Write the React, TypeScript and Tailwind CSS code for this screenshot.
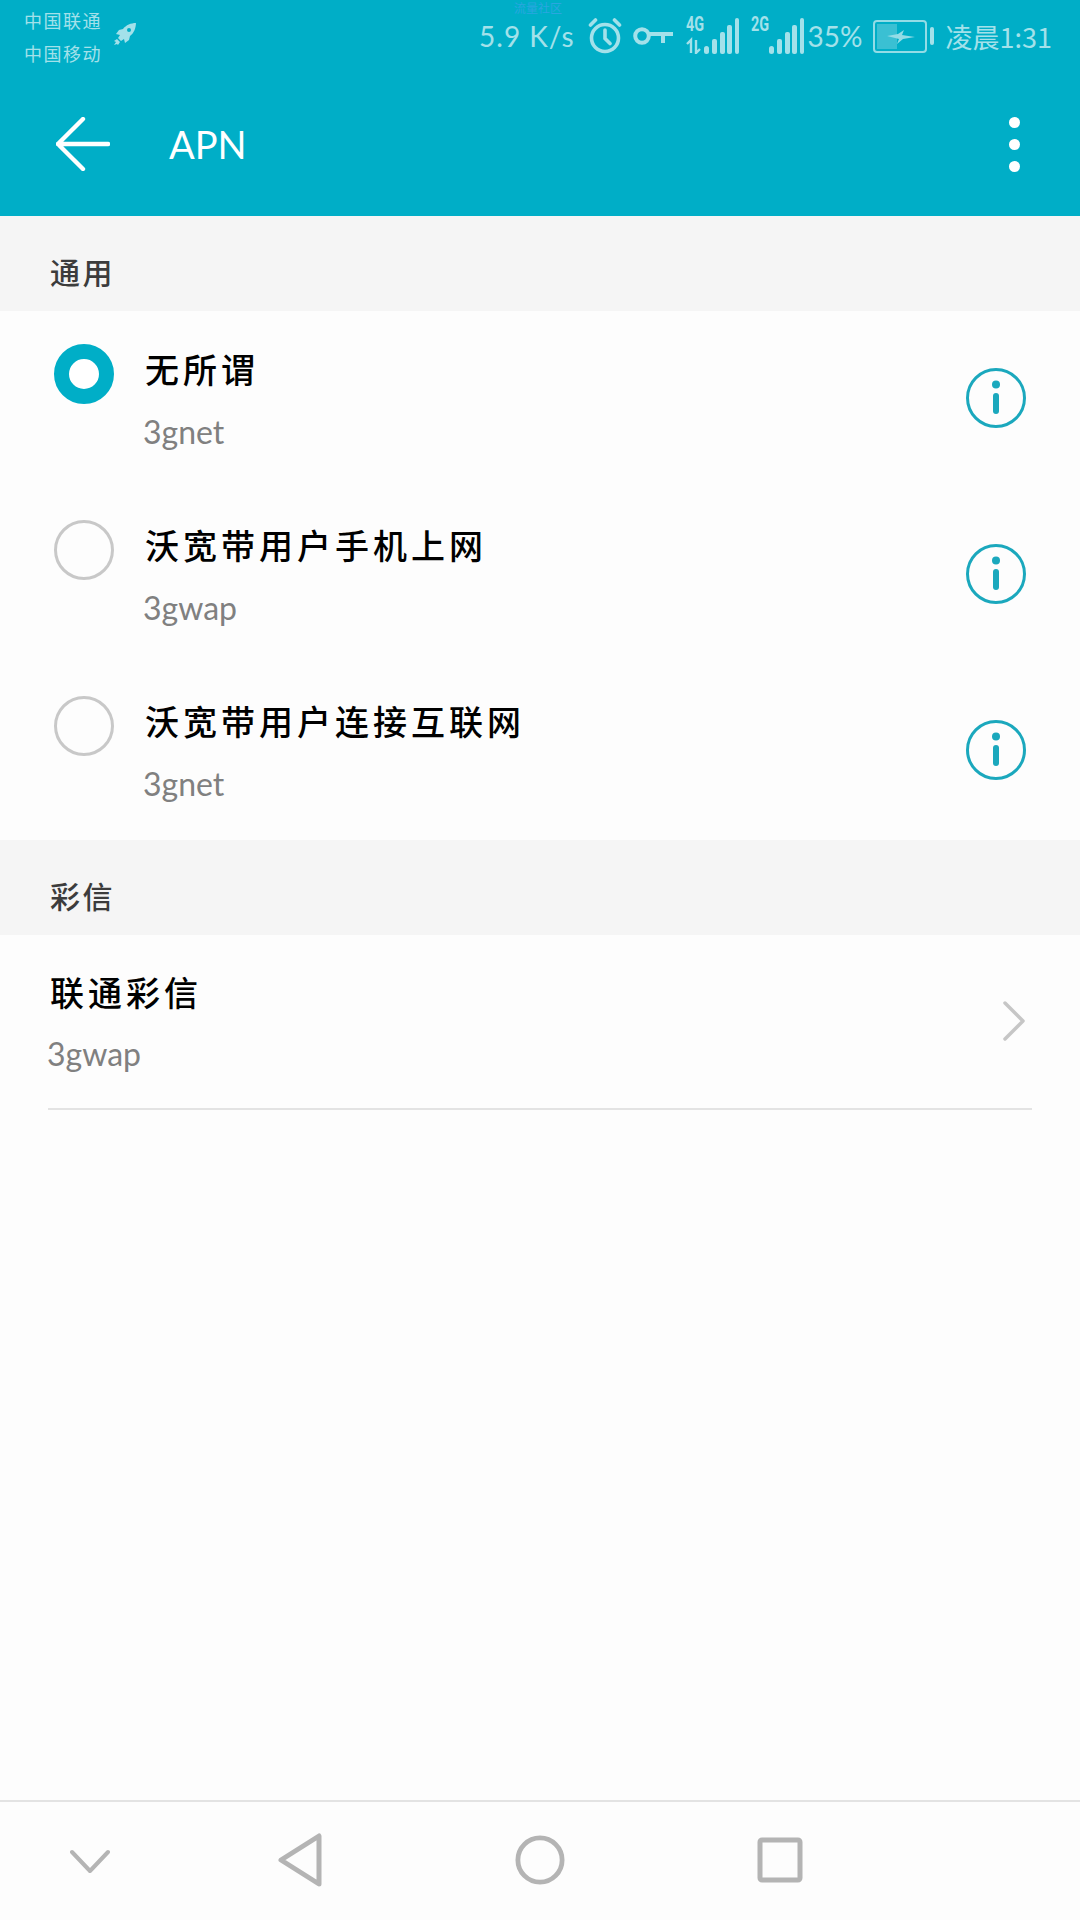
const cjk = "font-['Noto_Sans_CJK_SC','Noto_Sans',sans-serif]";
const latin = "font-['Lato','Noto_Sans_CJK_SC',sans-serif]";

const Signal = ({ label, lte }: { label: string; lte?: boolean }) => (
  <div className="relative w-[53px] h-[36px]">
    <span className="absolute left-0 top-[-5px] text-[20px] leading-[22px] font-bold font-['Roboto',sans-serif] scale-x-[0.72] origin-left">
      {label}
    </span>
    <svg viewBox="0 0 53 36" className="absolute inset-0 w-[53px] h-[36px]" fill="currentColor">
      {lte && (
        <g fill="none" stroke="currentColor" strokeWidth="2.4">
          <path d="M5 35V22L1 26M10 22v13l4-4" />
        </g>
      )}
      <rect x="18" y="28" width="5" height="8" rx="2.5" />
      <rect x="26" y="21" width="5" height="15" rx="2" />
      <rect x="34" y="14" width="5" height="22" rx="2" />
      <rect x="41" y="7" width="5" height="29" rx="2" />
      <rect x="49" y="0" width="4" height="36" rx="2" />
    </svg>
  </div>
);

const StatusBar = () => (
  <div className="h-[72px] flex items-start justify-between pl-[24px] pr-[28px] text-[#a3e1ea]">
    <div className="flex items-center">
      <div className={`${cjk} text-[18px] leading-[33px] pt-[4px] tracking-[1.5px]`}>
        <div>中国联通</div>
        <div>中国移动</div>
      </div>
      <svg viewBox="0 0 24 24" className="w-[24px] h-[24px] ml-[11px] mt-[-2px]" fill="currentColor">
        <path d="M23 1c-5 0-10 2-13 6L6 8 3 12l4 1-2 3 3 3 3-2 1 4 4-3 1-4c4-3 6-8 6-14z" />
        <circle cx="16" cy="8" r="2" fill="#00aec7" />
        <path d="M4 17l-3 2 2 1-2 3 3-1 1 1 2-3-3-3z" />
      </svg>
    </div>
    <div className="flex items-center h-[36px] mt-[18px]">
      <span className={`${latin} text-[28px] leading-none tracking-[1px] mr-[13px]`}>5.9 K/s</span>
      <svg viewBox="0 0 34 36" className="w-[34px] h-[36px] mr-[11px]" fill="none" stroke="currentColor" strokeWidth="3.6" strokeLinecap="round">
        <circle cx="17" cy="20" r="13.5" />
        <path d="M17 12v8.5l5 5M2.5 7l5-5M31.5 7l-5-5" />
      </svg>
      <svg viewBox="0 0 40 18" className="w-[40px] h-[18px] mr-[13px]" fill="none" stroke="currentColor" strokeWidth="4">
        <circle cx="9" cy="9" r="6.8" />
        <path d="M16 7h24M30 7v9" />
      </svg>
      <div className="mr-[12px]">
        <Signal label="4G" lte />
      </div>
      <div className="mr-[4px]">
        <Signal label="2G" />
      </div>
      <span className={`${latin} text-[28px] leading-none mr-[10px]`}>35%</span>
      <div className="relative w-[54px] h-[33px] border-2 border-current rounded-[4px] opacity-90">
        <div className="absolute left-[2px] top-[2px] bottom-[2px] w-[20px] bg-current opacity-40" />
        <svg viewBox="0 0 30 14" className="absolute left-[11px] top-[7px] w-[30px] h-[16px]" fill="currentColor">
          <path d="M1 6l11-2 6-4-2 5 13 2-12 2-6 5 2-5z" />
        </svg>
      </div>
      <div className="w-[4px] h-[18px] rounded-full bg-current ml-[3px] mr-[12px]" />
      <span className={`${cjk} text-[27px] leading-none`}>凌晨1:31</span>
    </div>
  </div>
);

const Toolbar = () => (
  <div className="h-[144px] flex items-center text-white relative">
    <svg viewBox="0 0 56 56" className="w-[54px] h-[54px] ml-[56px]" fill="none" stroke="currentColor" strokeWidth="4.5" strokeLinecap="round" strokeLinejoin="round">
      <path d="M2 28h52M28 2L2 28l26 26" />
    </svg>
    <span className={`${latin} text-[38px] leading-none ml-[59px]`}>APN</span>
    <div className="ml-auto mr-[60px] flex flex-col gap-[11px]">
      <div className="w-[11px] h-[11px] rounded-full bg-white" />
      <div className="w-[11px] h-[11px] rounded-full bg-white" />
      <div className="w-[11px] h-[11px] rounded-full bg-white" />
    </div>
  </div>
);

const SectionHeader = ({ title }: { title: string }) => (
  <div className={`${cjk} h-[95px] bg-[#f5f5f5] pl-[50px] pt-[35px] text-[30px] leading-[40px] tracking-[2.5px] font-medium text-[#3c3c3c]`}>
    {title}
  </div>
);

const InfoIcon = () => (
  <svg viewBox="0 0 60 60" className="w-[60px] h-[60px]" fill="none">
    <circle cx="30" cy="30" r="28.5" stroke="#1ba8bd" strokeWidth="3" />
    <circle cx="30" cy="16.5" r="4" fill="#1ba8bd" />
    <rect x="27" y="25" width="6" height="21" rx="3" fill="#1ba8bd" />
  </svg>
);

const ApnRow = ({ name, apn, selected }: { name: string; apn: string; selected?: boolean }) => (
  <div className="h-[176px] flex items-start px-[54px]">
    {selected ? (
      <div className="w-[60px] h-[60px] mt-[33px] rounded-full border-[15px] border-[#00aec7] bg-white shrink-0" />
    ) : (
      <div className="w-[60px] h-[60px] mt-[33px] rounded-full border-[3px] border-[#c8c8c8] shrink-0" />
    )}
    <div className="ml-[31px] flex-1">
      <div className={`${cjk} pt-[35px] text-[34px] leading-[46px] tracking-[4px] text-black font-medium`}>{name}</div>
      <div className={`${latin} -ml-[2px] mt-[20px] text-[32px] leading-[40px] text-[#808080]`}>{apn}</div>
    </div>
    <div className="mt-[57px]">
      <InfoIcon />
    </div>
  </div>
);

const NavBar = () => (
  <div className="h-[120px] pb-[3px] border-t-[2px] border-[#e3e3e3] flex items-center relative text-[#b4b4b4]">
    <svg viewBox="0 0 40 24" className="w-[40px] h-[24px] ml-[70px] mt-[2px]" fill="none" stroke="currentColor" strokeWidth="4" strokeLinecap="round" strokeLinejoin="round">
      <path d="M2 3l18 19L38 3" />
    </svg>
    <svg viewBox="0 0 44 54" className="w-[44px] h-[54px] ml-[168px]" fill="none" stroke="currentColor" strokeWidth="5" strokeLinejoin="round">
      <path d="M41 3v48L3 27z" />
    </svg>
    <svg viewBox="0 0 52 52" className="w-[50px] h-[50px] ml-[193px]" fill="none" stroke="currentColor" strokeWidth="5">
      <circle cx="26" cy="26" r="23" />
    </svg>
    <svg viewBox="0 0 46 46" className="w-[46px] h-[46px] ml-[192px]" fill="none" stroke="currentColor" strokeWidth="5" strokeLinejoin="round">
      <rect x="3" y="3" width="40" height="40" rx="2" />
    </svg>
  </div>
);

export default function App() {
  return (
    <div className="relative w-[1080px] h-[1920px] flex flex-col bg-[#fdfdfd] overflow-hidden">
      <span className={`${cjk} absolute left-[514px] top-0 text-[12px] leading-[16px] text-[#2aa6e0]`}>流量社区</span>
      <div className="bg-[#00aec7]">
        <StatusBar />
        <Toolbar />
      </div>
      <SectionHeader title="通用" />
      <div className="h-[529px]">
        <ApnRow name="无所谓" apn="3gnet" selected />
        <ApnRow name="沃宽带用户手机上网" apn="3gwap" />
        <ApnRow name="沃宽带用户连接互联网" apn="3gnet" />
      </div>
      <SectionHeader title="彩信" />
      <div className="h-[175px] mx-[48px] border-b-[2px] border-[#e3e3e3] flex items-start">
        <div className="flex-1">
          <div className={`${cjk} pl-[2px] pt-[34px] text-[34px] leading-[46px] tracking-[4px] text-black font-medium`}>联通彩信</div>
          <div className={`${latin} mt-[19px] -ml-[1px] text-[32px] leading-[40px] text-[#808080]`}>3gwap</div>
        </div>
        <svg viewBox="0 0 22 40" className="w-[22px] h-[40px] mt-[66px] mr-[7px]" fill="none" stroke="#c6c6c6" strokeWidth="3.5" strokeLinecap="round" strokeLinejoin="round">
          <path d="M2 2l18 18L2 38" />
        </svg>
      </div>
      <div className="flex-1" />
      <NavBar />
    </div>
  );
}
